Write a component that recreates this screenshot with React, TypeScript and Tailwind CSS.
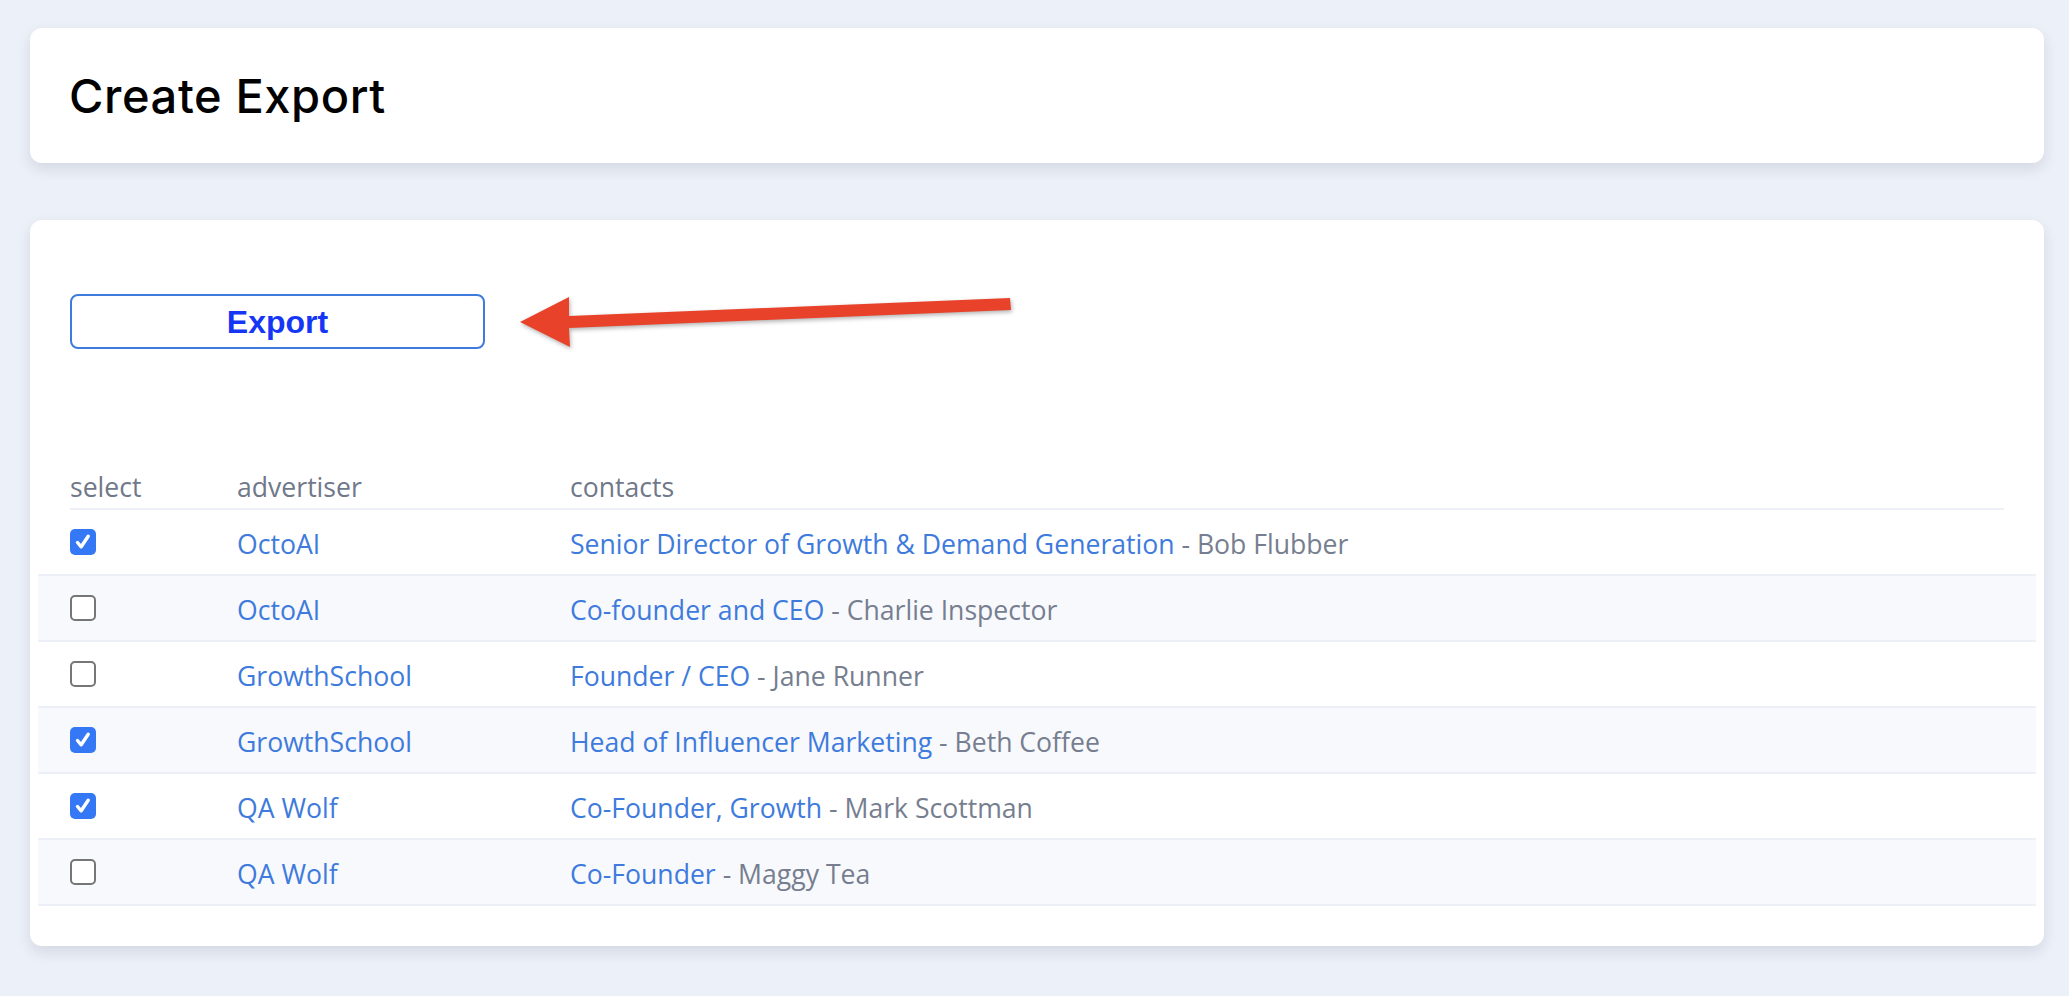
import React, { useState } from "react";

interface Contact {
  advertiser: string;
  title: string;
  name: string;
  selected: boolean;
}

const initialContacts: Contact[] = [
  { advertiser: "OctoAI", title: "Senior Director of Growth & Demand Generation", name: "Bob Flubber", selected: true },
  { advertiser: "OctoAI", title: "Co-founder and CEO", name: "Charlie Inspector", selected: false },
  { advertiser: "GrowthSchool", title: "Founder / CEO", name: "Jane Runner", selected: false },
  { advertiser: "GrowthSchool", title: "Head of Influencer Marketing", name: "Beth Coffee", selected: true },
  { advertiser: "QA Wolf", title: "Co-Founder, Growth", name: "Mark Scottman", selected: true },
  { advertiser: "QA Wolf", title: "Co-Founder", name: "Maggy Tea", selected: false },
];

const Checkbox: React.FC<{ checked: boolean; onChange: () => void }> = ({ checked, onChange }) => (
  <button
    onClick={onChange}
    className={`w-[26px] h-[26px] rounded-[5px] flex items-center justify-center ${
      checked ? "bg-[#3478f6]" : "bg-white border-2 border-[#767676]"
    }`}
  >
    {checked && (
      <svg width="18" height="18" viewBox="0 0 18 18">
        <path d="M3.5 9.5 L7.2 13.8 L14.2 3.2" fill="none" stroke="white" strokeWidth="3.4" strokeLinecap="round" strokeLinejoin="round" />
      </svg>
    )}
  </button>
);

const App: React.FC = () => {
  const [contacts, setContacts] = useState<Contact[]>(initialContacts);

  const toggle = (idx: number) => {
    setContacts((prev) => prev.map((c, i) => (i === idx ? { ...c, selected: !c.selected } : c)));
  };

  return (
    <div className="min-h-screen bg-[#ecf0f8] pt-[28px] pl-[30px] pr-[25px] pb-10 font-['Open_Sans',sans-serif]">
      {/* header card */}
      <div className="h-[135px] bg-white rounded-xl shadow-[0_6px_14px_rgba(30,40,70,0.12)] flex items-center px-[39px]">
        <h1 className="font-['Inter',sans-serif] font-medium text-[47px] leading-none text-black tracking-[0.6px]">
          Create Export
        </h1>
      </div>

      {/* export card */}
      <div className="relative mt-[57px] bg-white rounded-xl shadow-[0_6px_14px_rgba(30,40,70,0.12)] px-10 pt-[74px] pb-[40px]">
        <button className="w-[415px] h-[55px] border-2 border-[#3e7bdc] rounded-lg bg-white font-['Liberation_Sans',Arial,sans-serif] font-bold text-[32px] text-[#1536f5] leading-none">
          Export
        </button>

        {/* annotation arrow */}
        <svg
          className="absolute left-0 top-0 pointer-events-none"
          width="1100"
          height="200"
          viewBox="0 0 1100 200"
          style={{ filter: "drop-shadow(1px 2px 2px rgba(0,0,0,0.3))" }}
        >
          <polygon points="490,102 539,77 539,96 980,78 981,90 539,108 540,127" fill="#e8432a" />
        </svg>

        <div className="mt-[120px] grid grid-cols-[167px_333px_1fr] border-b-2 border-[#edf0f6] pb-[3px] text-[26.6px] leading-[36px] text-[#707889]">
          <div>select</div>
          <div>advertiser</div>
          <div>contacts</div>
        </div>

        <div className="-mx-8">
          {contacts.map((c, idx) => (
            <div
              key={idx}
              className={`h-[66px] grid grid-cols-[167px_333px_1fr] items-center px-8 border-b-2 border-[#edf0f6] text-[26.6px] leading-[36px] ${
                idx % 2 === 1 ? "bg-[#f8f9fd]" : "bg-white"
              }`}
            >
              <div className="flex items-center">
                <Checkbox checked={c.selected} onChange={() => toggle(idx)} />
              </div>
              <div className="mt-1 text-[#3e7bdc]">{c.advertiser}</div>
              <div className="mt-1 whitespace-nowrap">
                <span className="text-[#3e7bdc]">{c.title}</span>
                <span className="text-[#767e8f]"> - {c.name}</span>
              </div>
            </div>
          ))}
        </div>
      </div>
    </div>
  );
};

export default App;
